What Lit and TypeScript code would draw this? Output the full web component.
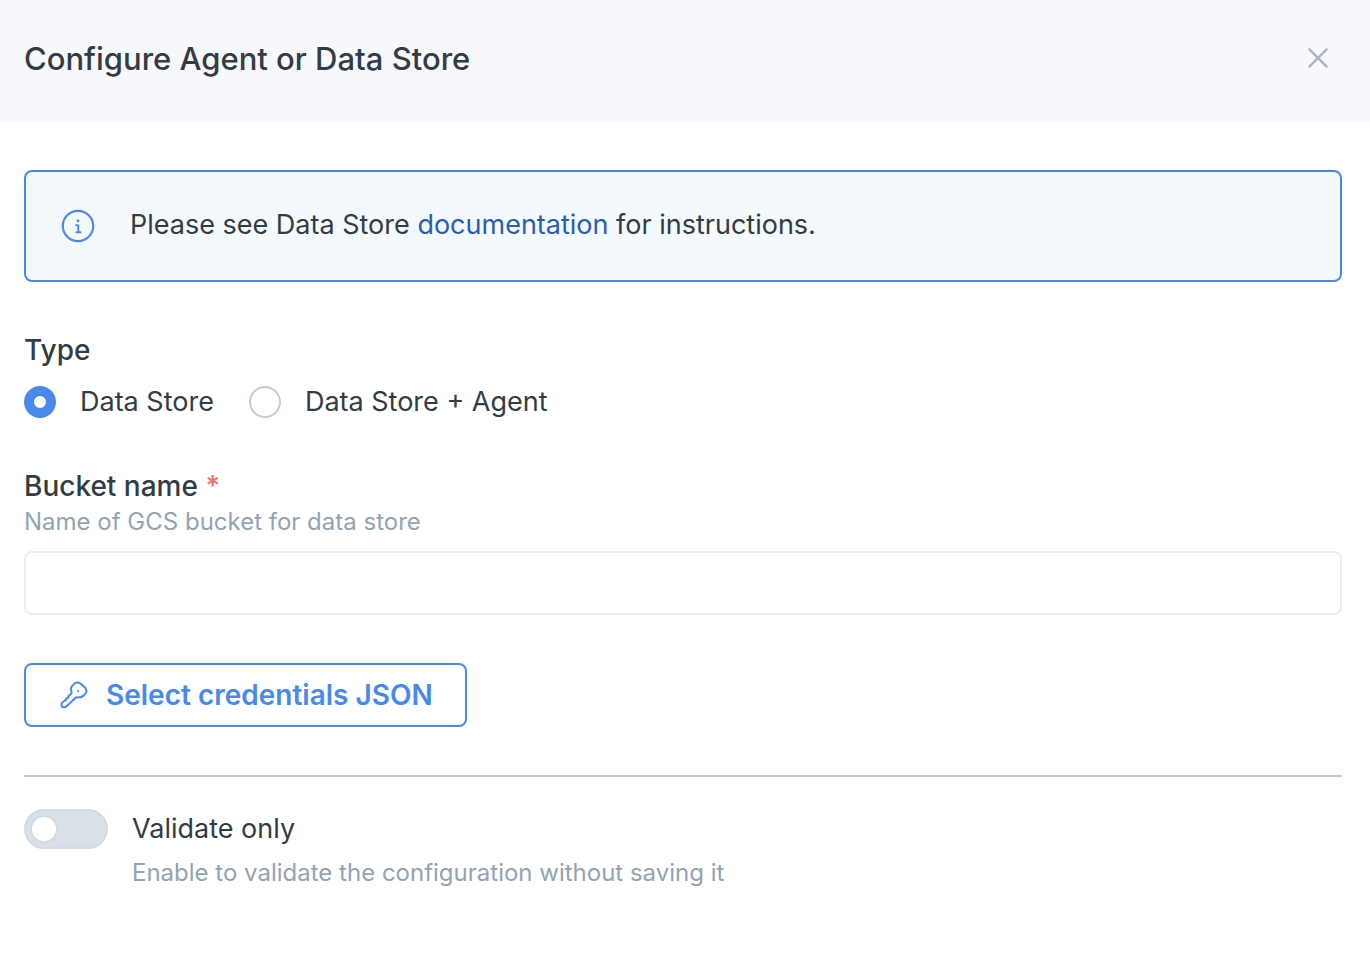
import { LitElement, html, css } from "lit";
import { customElement, state } from "lit/decorators.js";

@customElement("app-root")
export class AppRoot extends LitElement {
  @state() private type = "store";
  @state() private bucket = "";
  @state() private validateOnly = false;

  static styles = css`
    :host {
      display: block;
      min-height: 100vh;
      background: #ffffff;
      color: #323c44;
      font-family: Inter, "Noto Sans", sans-serif;
      font-size: 27px;
      line-height: 40px;
    }
    * {
      box-sizing: border-box;
    }
    button,
    input {
      font: inherit;
      margin: 0;
    }
    .header {
      display: flex;
      align-items: flex-start;
      justify-content: space-between;
      padding: 34px 28px 38px 24px;
      background: #f7f8fc;
    }
    .title {
      margin: 0;
      font-size: 31px;
      font-weight: 500;
      line-height: 50px;
    }
    .close {
      display: flex;
      padding: 12px;
      border: 0;
      background: none;
      color: #a7b6c2;
      cursor: pointer;
    }
    .body {
      display: flex;
      flex-direction: column;
      gap: 48px;
      padding: 48px 28px 48px 24px;
    }
    .notice {
      display: flex;
      align-items: flex-start;
      gap: 32px;
      padding: 34px 32px;
      border: 2px solid #4989ea;
      border-radius: 8px;
      background: #f4f9fe;
      line-height: 38px;
    }
    .notice svg {
      flex: none;
      color: #4989ea;
    }
    .notice p {
      margin: 0;
    }
    .link {
      color: #2a5db0;
      text-decoration: none;
    }
    .group {
      margin: 0;
      padding: 0;
      border: 0;
      min-width: 0;
    }
    .label {
      display: block;
      padding: 0;
      font-size: 28px;
      font-weight: 500;
    }
    .required {
      color: #f1706f;
    }
    .options {
      display: flex;
      flex-wrap: wrap;
      gap: 35px;
      padding-top: 16px;
      line-height: 32px;
    }
    .option {
      display: flex;
      align-items: center;
      gap: 24px;
    }
    .radio {
      appearance: none;
      flex: none;
      width: 32px;
      height: 32px;
      border: 2px solid #c1cdd9;
      border-radius: 50%;
      background: #ffffff;
    }
    .radio:checked {
      border: 10px solid #4989ea;
    }
    .help {
      margin: 0;
      color: #94a3b2;
      font-size: 24px;
      line-height: 32px;
    }
    .text {
      display: block;
      width: 100%;
      height: 64px;
      margin-top: 13px;
      padding: 0 20px;
      border: 2px solid #e8ecf3;
      border-radius: 8px;
      background: #ffffff;
      color: inherit;
    }
    .select {
      display: flex;
      align-items: center;
      align-self: flex-start;
      gap: 16px;
      height: 64px;
      padding: 0 32px;
      border: 2px solid #4989ea;
      border-radius: 8px;
      background: #ffffff;
      color: #4989ea;
      font-size: 28px;
      font-weight: 600;
      cursor: pointer;
    }
    .footer {
      display: flex;
      align-items: flex-start;
      gap: 24px;
      padding-top: 32px;
      border-top: 2px solid #becad6;
    }
    .switch {
      appearance: none;
      display: flex;
      align-items: center;
      flex: none;
      width: 84px;
      height: 40px;
      padding: 0 6px;
      border: 2px solid #d2dce4;
      border-radius: 20px;
      background: #d9e1e8;
    }
    .switch::before {
      content: "";
      width: 24px;
      height: 24px;
      border-radius: 50%;
      background: #ffffff;
      box-shadow: 0 0 0 2px #d2dce4;
    }
    .switch:checked {
      justify-content: flex-end;
      border-color: #4989ea;
      background: #4989ea;
    }
    .footer .help {
      padding-top: 8px;
    }
  `;

  render() {
    return html`
      <header class="header">
        <h1 class="title">Configure Agent or Data Store</h1>
        <button class="close" type="button" aria-label="Close">
          <svg width="24" height="24" viewBox="0 0 24 24" fill="none" stroke="currentColor" stroke-width="2.4" stroke-linecap="round">
            <path d="M3.4 3.4 20.6 20.6M20.6 3.4 3.4 20.6" />
          </svg>
        </button>
      </header>
      <main class="body">
        <div class="notice" role="note">
          <svg width="40" height="40" viewBox="-2 -2 40 40" fill="none" stroke="currentColor" stroke-width="2.2" aria-hidden="true">
            <circle cx="18" cy="18" r="15.2" />
            <path d="M16 17.1H18.3V22.6Q18.3 24.2 19.6 24.2H20.6M16.4 24.2H19" stroke-linecap="round" stroke-linejoin="round" stroke-width="1.9" />
            <circle cx="18" cy="12.9" r="1.4" fill="currentColor" stroke="none" />
          </svg>
          <p>Please see Data Store <a class="link" href="#documentation">documentation</a> for instructions.</p>
        </div>
        <fieldset class="group">
          <legend class="label">Type</legend>
          <div class="options">
            <label class="option">
              <input class="radio" type="radio" name="type" .checked=${this.type === "store"} @change=${() => (this.type = "store")} />
              Data Store
            </label>
            <label class="option">
              <input class="radio" type="radio" name="type" .checked=${this.type === "agent"} @change=${() => (this.type = "agent")} />
              Data Store + Agent
            </label>
          </div>
        </fieldset>
        <div class="group">
          <label class="label" for="bucket">Bucket name <span class="required">*</span></label>
          <p class="help" id="bucket-help">Name of GCS bucket for data store</p>
          <input
            class="text"
            id="bucket"
            type="text"
            required
            aria-describedby="bucket-help"
            .value=${this.bucket}
            @input=${(e: Event) => (this.bucket = (e.target as HTMLInputElement).value)}
          />
        </div>
        <button class="select" type="button">
          <svg width="32" height="32" viewBox="0 0 32 32" fill="none" stroke="currentColor" stroke-width="2" stroke-linejoin="round" stroke-linecap="round" aria-hidden="true">
            <path d="M14.6 6.6 16.6 4.6Q17.8 3.5 19.4 3.4 21.2 3.3 22.5 4.4L27.2 8.8Q28.6 10.4 28.5 12.2 28.4 13.6 27.4 14.6L25 17Q23.8 18.2 22.2 18.3L17.8 18.6 8.6 27.2Q7.6 28.2 6.2 28.2H5Q3.6 28.2 3.6 26.8V25.4Q3.6 24.2 4.6 23.3L6.6 21.8 7.8 21.4 8 19.8 10 19 10.4 17.2 13.6 14.2 13 9.8Q12.8 8.2 14.6 6.6Z" />
            <circle cx="20" cy="12" r="1.1" fill="currentColor" stroke="none" />
          </svg>
          Select credentials JSON
        </button>
        <div class="footer">
          <input
            class="switch"
            id="validate"
            type="checkbox"
            role="switch"
            aria-describedby="validate-help"
            .checked=${this.validateOnly}
            @change=${(e: Event) => (this.validateOnly = (e.target as HTMLInputElement).checked)}
          />
          <div>
            <label for="validate">Validate only</label>
            <p class="help" id="validate-help">Enable to validate the configuration without saving it</p>
          </div>
        </div>
      </main>
    `;
  }
}
